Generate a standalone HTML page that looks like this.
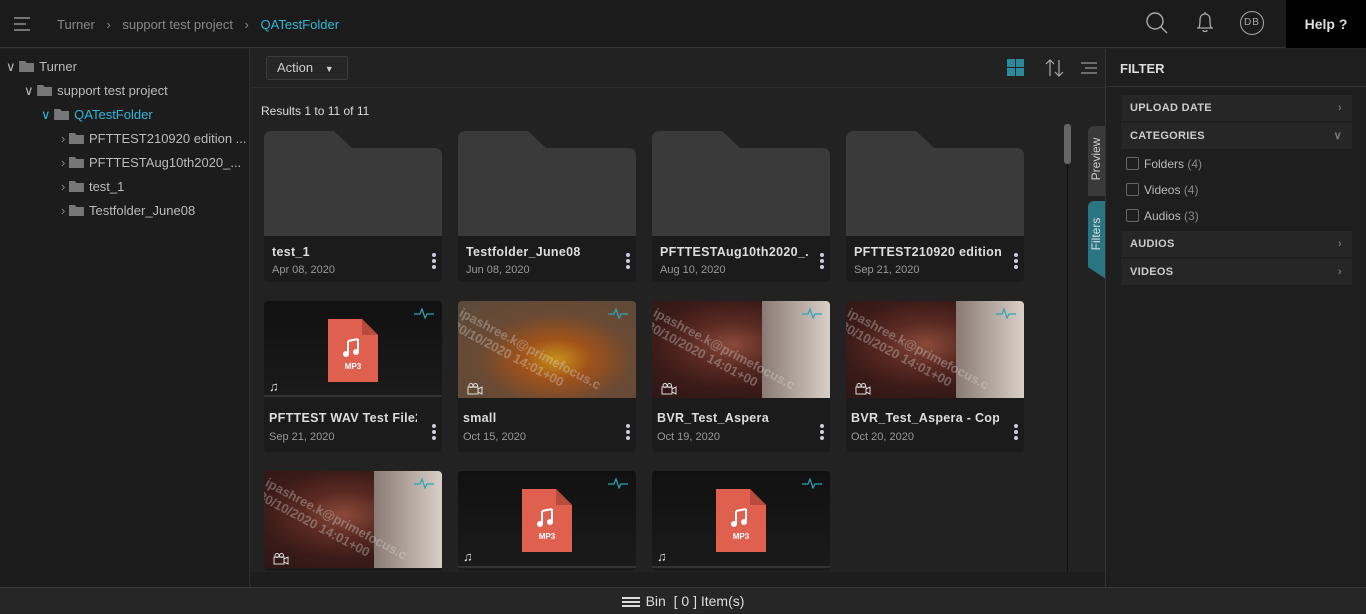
<!DOCTYPE html>
<html><head><style>
*{box-sizing:border-box;margin:0;padding:0}
body{width:1366px;height:613px;overflow:hidden;background:#222;font-family:"Liberation Sans",sans-serif;color:#ccc;position:relative;font-size:13px}
.abs{position:absolute}
.top{left:0;top:0;width:1366px;height:48px;background:#1b1b1b;border-bottom:1px solid #333}
.left{left:0;top:49px;width:250px;height:538px;background:#1c1c1c;border-right:1px solid #2c2c2c}
.right{left:1105px;top:49px;width:261px;height:538px;background:#1e1e1e;border-left:1px solid #333}
.bottom{left:0;top:587px;width:1366px;height:26px;background:#262626;border-top:1px solid #3a3a3a;text-align:center;font-size:14px;color:#ddd;line-height:26px}
.tree{font-size:13px;color:#bbb;height:24px;line-height:24px;white-space:nowrap}
.fi{display:inline-block;width:15px;height:11px;background:#777;vertical-align:-1px;margin-right:5px;clip-path:polygon(0 0,40% 0,50% 18%,100% 18%,100% 100%,0 100%)}
.card{width:178px;background:#1b1b1b;border-radius:4px;overflow:hidden}
.title{font-weight:bold;font-size:12.5px;color:#ddd;letter-spacing:.3px;white-space:nowrap;overflow:hidden;width:148px}
.date{font-size:11px;color:#999}
.dots{position:absolute;right:6px;width:4px}
.dots i{display:block;width:4px;height:4px;border-radius:2px;background:#ccd;margin-bottom:2px}
.fsec{left:15px;width:231px;height:26px;background:#262626;font-size:11px;font-weight:bold;color:#ccc;line-height:26px;padding-left:9px;letter-spacing:.3px}
.fsec span{position:absolute;right:10px;color:#777}
.cb{left:20px;font-size:12px;color:#bbb}
.cb b{display:inline-block;width:13px;height:13px;border:1px solid #666;border-radius:2px;vertical-align:-2px;margin-right:5px}
.cb em{font-style:normal;color:#888}
.vid{background:radial-gradient(ellipse at 45% 45%,#8a4a3a 0,#5a2a22 30%,#3a1a18 60%,#2a1614 100%)}
.wm{position:absolute;left:6px;top:4px;color:rgba(220,220,220,.35);font-size:13px;font-weight:bold;transform:rotate(28deg);transform-origin:left top;white-space:nowrap;line-height:15px}
</style></head><body>
<div class="abs top">
  <svg class="abs" style="left:14px;top:17px" width="18" height="14"><path d="M0 1H16M0 7H12M0 13H16" stroke="#aaa" stroke-width="1.3"/></svg>
  <div class="abs" style="left:57px;top:17px;font-size:13px;color:#888">Turner <span style="margin:0 8px">&#x203A;</span> support test project <span style="margin:0 8px">&#x203A;</span> <span style="color:#2fb6d8">QATestFolder</span></div>
  <svg class="abs" style="left:1145px;top:11px" width="24" height="24"><circle cx="10" cy="10" r="8" stroke="#aaa" stroke-width="1.4" fill="none"/><path d="M16 16L22 22" stroke="#aaa" stroke-width="1.4"/></svg>
  <svg class="abs" style="left:1194px;top:10px" width="22" height="24"><path d="M11 2V4M5 18C6 15 6 13 6 10C6 6 8 4 11 4C14 4 16 6 16 10C16 13 16 15 17 18ZM3 18H19M9 20C9 22 13 22 13 20" stroke="#aaa" stroke-width="1.3" fill="none"/></svg>
  <div class="abs" style="left:1240px;top:11px;width:24px;height:24px;border:1.3px solid #aaa;border-radius:50%;font-size:10px;color:#aaa;text-align:center;line-height:22px;letter-spacing:1px">DB</div>
  <div class="abs" style="left:1286px;top:0;width:80px;height:48px;background:#000;color:#ddd;font-weight:bold;font-size:14px;line-height:48px;text-align:center">Help ?</div>
</div>
<div class="abs left">
  <div class="abs tree" style="left:6px;top:6px;color:#bbb">&#x2228;&nbsp;<span class="fi"></span>Turner</div>
  <div class="abs tree" style="left:24px;top:30px">&#x2228;&nbsp;<span class="fi"></span>support test project</div>
  <div class="abs tree" style="left:41px;top:54px;color:#2fb6d8">&#x2228;&nbsp;<span class="fi"></span>QATestFolder</div>
  <div class="abs tree" style="left:61px;top:78px"><span style="color:#888">&#x203A;</span>&nbsp;<span class="fi"></span>PFTTEST210920 edition ...</div>
  <div class="abs tree" style="left:61px;top:102px"><span style="color:#888">&#x203A;</span>&nbsp;<span class="fi"></span>PFTTESTAug10th2020_...</div>
  <div class="abs tree" style="left:61px;top:126px"><span style="color:#888">&#x203A;</span>&nbsp;<span class="fi"></span>test_1</div>
  <div class="abs tree" style="left:61px;top:150px"><span style="color:#888">&#x203A;</span>&nbsp;<span class="fi"></span>Testfolder_June08</div>
</div>
<div class="abs" style="left:251px;top:87px;width:854px;height:1px;background:#2e2e2e"></div>
<div class="abs" style="left:266px;top:56px;width:82px;height:24px;border:1px solid #3c3c3c;border-radius:3px;background:#262626;font-size:13px;color:#ccc;line-height:22px;padding-left:10px">Action <span style="font-size:9px;margin-left:8px">&#9660;</span></div>
<svg class="abs" style="left:1007px;top:59px" width="18" height="18"><rect x="0" y="0" width="8" height="8" fill="#2a8a9a"/><rect x="9" y="0" width="8" height="8" fill="#2a8a9a"/><rect x="0" y="9" width="8" height="8" fill="#2a8a9a"/><rect x="9" y="9" width="8" height="8" fill="#2a8a9a"/></svg>
<svg class="abs" style="left:1045px;top:58px" width="20" height="20"><path d="M5 18V2M1 6L5 2L9 6M14 2V18M10 14L14 18L18 14" stroke="#aaa" stroke-width="1.2" fill="none"/></svg>
<svg class="abs" style="left:1081px;top:62px" width="18" height="13"><path d="M0 1H16M4 6H16M0 11H16" stroke="#999" stroke-width="1.2"/></svg>
<div class="abs" style="left:261px;top:104px;font-size:12px;color:#ddd">Results 1 to 11 of 11</div>
<div class="abs" style="left:1064px;top:124px;width:7px;height:40px;background:#666;border-radius:3px"></div>
<div class="abs" style="left:1067px;top:164px;width:1px;height:408px;background:#111"></div>
<div class="abs" style="left:1088px;top:126px;width:18px;height:70px;background:#3a3a3a;border-radius:6px 0 0 0;color:#ccc;font-size:12px"><div style="transform:rotate(-90deg);position:absolute;left:-17px;top:26px;width:50px;text-align:center">Preview</div></div>
<div class="abs" style="left:1088px;top:201px;width:18px;height:78px;background:#2a7582;border-radius:6px 0 0 0;clip-path:polygon(0 0,100% 0,100% 100%,0 85%);color:#ddd;font-size:12px"><div style="transform:rotate(-90deg);position:absolute;left:-17px;top:26px;width:50px;text-align:center">Filters</div></div>

<div class="abs" style="left:264px;top:131px">
 <svg width="178" height="106" class="abs"><path d="M8 0H70L88 17H170Q178 17 178 25V106H0V8Q0 0 8 0Z" fill="#3a3a3a"/></svg>
 <div class="abs card" style="top:105px;height:46px;border-radius:0 0 4px 4px"><div class="abs title" style="left:8px;top:9px">test_1</div><div class="abs date" style="left:8px;top:28px">Apr 08, 2020</div><div class="dots" style="top:17px"><i></i><i></i><i></i></div></div>
</div>
<div class="abs" style="left:458px;top:131px">
 <svg width="178" height="106" class="abs"><path d="M8 0H70L88 17H170Q178 17 178 25V106H0V8Q0 0 8 0Z" fill="#3a3a3a"/></svg>
 <div class="abs card" style="top:105px;height:46px;border-radius:0 0 4px 4px"><div class="abs title" style="left:8px;top:9px">Testfolder_June08</div><div class="abs date" style="left:8px;top:28px">Jun 08, 2020</div><div class="dots" style="top:17px"><i></i><i></i><i></i></div></div>
</div>
<div class="abs" style="left:652px;top:131px">
 <svg width="178" height="106" class="abs"><path d="M8 0H70L88 17H170Q178 17 178 25V106H0V8Q0 0 8 0Z" fill="#3a3a3a"/></svg>
 <div class="abs card" style="top:105px;height:46px;border-radius:0 0 4px 4px"><div class="abs title" style="left:8px;top:9px">PFTTESTAug10th2020_...</div><div class="abs date" style="left:8px;top:28px">Aug 10, 2020</div><div class="dots" style="top:17px"><i></i><i></i><i></i></div></div>
</div>
<div class="abs" style="left:846px;top:131px">
 <svg width="178" height="106" class="abs"><path d="M8 0H70L88 17H170Q178 17 178 25V106H0V8Q0 0 8 0Z" fill="#3a3a3a"/></svg>
 <div class="abs card" style="top:105px;height:46px;border-radius:0 0 4px 4px"><div class="abs title" style="left:8px;top:9px">PFTTEST210920 edition...</div><div class="abs date" style="left:8px;top:28px">Sep 21, 2020</div><div class="dots" style="top:17px"><i></i><i></i><i></i></div></div>
</div>

<div class="abs card" style="left:264px;top:301px;height:151px">
 <div class="abs" style="left:0;top:0;width:178px;height:96px;background:linear-gradient(#111,#1a1a1a);border-bottom:2px solid #333"></div>
 <svg class="abs" style="left:64px;top:18px" width="50" height="63"><path d="M0 0H34L50 16V63H0Z" fill="#e06050"/><path d="M34 0V16H50Z" fill="#b84a3e"/><path d="M20 22V34M30 20V32M20 22L30 20" stroke="#fff" stroke-width="2" fill="none"/><circle cx="18" cy="35" r="3" fill="#fff"/><circle cx="28" cy="33" r="3" fill="#fff"/><text x="25" y="50" font-size="8" fill="#fff" text-anchor="middle" font-family="Liberation Sans" font-weight="bold">MP3</text></svg>
 <svg class="abs" style="left:150px;top:6px" width="20" height="12"><path d="M0 7H6L8 2L11 11L13 7H20" stroke="#2aa5b5" stroke-width="1.2" fill="none"/></svg>
 <div class="abs" style="left:5px;top:78px;color:#ddd;font-size:13px">&#9835;</div>
 <div class="abs title" style="left:5px;top:110px">PFTTEST WAV Test File23</div><div class="abs date" style="left:5px;top:130px">Sep 21, 2020</div><div class="dots" style="top:123px"><i></i><i></i><i></i></div>
</div>
<div class="abs card" style="left:458px;top:301px;height:151px">
 <div class="abs" style="left:0;top:0;width:178px;height:97px;background:radial-gradient(ellipse at 55% 60%,#c8901a 0,#a0521a 25%,#6a4a34 55%,#5a4a3a 100%);overflow:hidden"><div class="wm">ipashree.k@primefocus.c<br>30/10/2020 14:01+00</div></div>
 <svg class="abs" style="left:150px;top:6px" width="20" height="12"><path d="M0 7H6L8 2L11 11L13 7H20" stroke="#2aa5b5" stroke-width="1.2" fill="none"/></svg>
 <svg class="abs" style="left:9px;top:82px" width="16" height="12"><rect x="1" y="4" width="10" height="7" stroke="#ddd" fill="none"/><path d="M11 6L15 4V11L11 9" stroke="#ddd" fill="none"/><circle cx="4" cy="2.5" r="2" stroke="#ddd" fill="none"/><circle cx="8.5" cy="2.5" r="2" stroke="#ddd" fill="none"/></svg>
 <div class="abs title" style="left:5px;top:110px">small</div><div class="abs date" style="left:5px;top:130px">Oct 15, 2020</div><div class="dots" style="top:123px"><i></i><i></i><i></i></div>
</div>
<div class="abs card" style="left:652px;top:301px;height:151px">
 <div class="abs vid" style="left:0;top:0;width:178px;height:97px;overflow:hidden"><div class="abs" style="left:110px;top:0;width:68px;height:97px;background:linear-gradient(90deg,#8a7a74,#d8d0c8)"></div><div class="wm">ipashree.k@primefocus.c<br>30/10/2020 14:01+00</div></div>
 <svg class="abs" style="left:150px;top:6px" width="20" height="12"><path d="M0 7H6L8 2L11 11L13 7H20" stroke="#2aa5b5" stroke-width="1.2" fill="none"/></svg>
 <svg class="abs" style="left:9px;top:82px" width="16" height="12"><rect x="1" y="4" width="10" height="7" stroke="#ddd" fill="none"/><path d="M11 6L15 4V11L11 9" stroke="#ddd" fill="none"/><circle cx="4" cy="2.5" r="2" stroke="#ddd" fill="none"/><circle cx="8.5" cy="2.5" r="2" stroke="#ddd" fill="none"/></svg>
 <div class="abs title" style="left:5px;top:110px">BVR_Test_Aspera</div><div class="abs date" style="left:5px;top:130px">Oct 19, 2020</div><div class="dots" style="top:123px"><i></i><i></i><i></i></div>
</div>
<div class="abs card" style="left:846px;top:301px;height:151px">
 <div class="abs vid" style="left:0;top:0;width:178px;height:97px;overflow:hidden"><div class="abs" style="left:110px;top:0;width:68px;height:97px;background:linear-gradient(90deg,#8a7a74,#d8d0c8)"></div><div class="wm">ipashree.k@primefocus.c<br>30/10/2020 14:01+00</div></div>
 <svg class="abs" style="left:150px;top:6px" width="20" height="12"><path d="M0 7H6L8 2L11 11L13 7H20" stroke="#2aa5b5" stroke-width="1.2" fill="none"/></svg>
 <svg class="abs" style="left:9px;top:82px" width="16" height="12"><rect x="1" y="4" width="10" height="7" stroke="#ddd" fill="none"/><path d="M11 6L15 4V11L11 9" stroke="#ddd" fill="none"/><circle cx="4" cy="2.5" r="2" stroke="#ddd" fill="none"/><circle cx="8.5" cy="2.5" r="2" stroke="#ddd" fill="none"/></svg>
 <div class="abs title" style="left:5px;top:110px">BVR_Test_Aspera - Copy...</div><div class="abs date" style="left:5px;top:130px">Oct 20, 2020</div><div class="dots" style="top:123px"><i></i><i></i><i></i></div>
</div>

<div class="abs card" style="left:264px;top:471px;height:100px">
 <div class="abs vid" style="left:0;top:0;width:178px;height:97px;overflow:hidden"><div class="abs" style="left:110px;top:0;width:68px;height:97px;background:linear-gradient(90deg,#8a7a74,#d8d0c8)"></div><div class="wm">ipashree.k@primefocus.c<br>30/10/2020 14:01+00</div></div>
 <svg class="abs" style="left:150px;top:6px" width="20" height="12"><path d="M0 7H6L8 2L11 11L13 7H20" stroke="#2aa5b5" stroke-width="1.2" fill="none"/></svg>
 <svg class="abs" style="left:9px;top:82px" width="16" height="12"><rect x="1" y="4" width="10" height="7" stroke="#ddd" fill="none"/><path d="M11 6L15 4V11L11 9" stroke="#ddd" fill="none"/><circle cx="4" cy="2.5" r="2" stroke="#ddd" fill="none"/><circle cx="8.5" cy="2.5" r="2" stroke="#ddd" fill="none"/></svg>
</div>
<div class="abs card" style="left:458px;top:471px;height:100px">
 <div class="abs" style="left:0;top:0;width:178px;height:97px;background:linear-gradient(#111,#1a1a1a);border-bottom:2px solid #333"></div>
 <svg class="abs" style="left:64px;top:18px" width="50" height="63"><path d="M0 0H34L50 16V63H0Z" fill="#e06050"/><path d="M34 0V16H50Z" fill="#b84a3e"/><path d="M20 22V34M30 20V32M20 22L30 20" stroke="#fff" stroke-width="2" fill="none"/><circle cx="18" cy="35" r="3" fill="#fff"/><circle cx="28" cy="33" r="3" fill="#fff"/><text x="25" y="50" font-size="8" fill="#fff" text-anchor="middle" font-family="Liberation Sans" font-weight="bold">MP3</text></svg>
 <svg class="abs" style="left:150px;top:6px" width="20" height="12"><path d="M0 7H6L8 2L11 11L13 7H20" stroke="#2aa5b5" stroke-width="1.2" fill="none"/></svg>
 <div class="abs" style="left:5px;top:78px;color:#ddd;font-size:13px">&#9835;</div>
</div>
<div class="abs card" style="left:652px;top:471px;height:100px">
 <div class="abs" style="left:0;top:0;width:178px;height:97px;background:linear-gradient(#111,#1a1a1a);border-bottom:2px solid #333"></div>
 <svg class="abs" style="left:64px;top:18px" width="50" height="63"><path d="M0 0H34L50 16V63H0Z" fill="#e06050"/><path d="M34 0V16H50Z" fill="#b84a3e"/><path d="M20 22V34M30 20V32M20 22L30 20" stroke="#fff" stroke-width="2" fill="none"/><circle cx="18" cy="35" r="3" fill="#fff"/><circle cx="28" cy="33" r="3" fill="#fff"/><text x="25" y="50" font-size="8" fill="#fff" text-anchor="middle" font-family="Liberation Sans" font-weight="bold">MP3</text></svg>
 <svg class="abs" style="left:150px;top:6px" width="20" height="12"><path d="M0 7H6L8 2L11 11L13 7H20" stroke="#2aa5b5" stroke-width="1.2" fill="none"/></svg>
 <div class="abs" style="left:5px;top:78px;color:#ddd;font-size:13px">&#9835;</div>
</div>
<div class="abs" style="left:251px;top:572px;width:854px;height:15px;background:#1d1d1d"></div>

<div class="abs right">
  <div class="abs" style="left:14px;top:12px;font-size:13px;font-weight:bold;color:#ddd">FILTER</div>
  <div class="abs" style="left:0;top:37px;width:261px;height:1px;background:#333"></div>
  <div class="abs fsec" style="top:46px">UPLOAD DATE<span>&#x203A;</span></div>
  <div class="abs fsec" style="top:74px">CATEGORIES<span>&#x2228;</span></div>
  <div class="abs cb" style="top:108px"><b></b>Folders <em>(4)</em></div>
  <div class="abs cb" style="top:134px"><b></b>Videos <em>(4)</em></div>
  <div class="abs cb" style="top:160px"><b></b>Audios <em>(3)</em></div>
  <div class="abs fsec" style="top:182px">AUDIOS<span>&#x203A;</span></div>
  <div class="abs fsec" style="top:210px">VIDEOS<span>&#x203A;</span></div>
</div>
<div class="abs bottom"><span style="display:inline-block;width:18px;height:10px;border-top:2px solid #ddd;border-bottom:2px solid #ddd;position:relative;vertical-align:-1px;margin-right:6px"><span style="position:absolute;left:0;top:2px;width:18px;height:2px;background:#ddd"></span></span>Bin &nbsp;[ 0 ] Item(s)</div>
</body></html>
